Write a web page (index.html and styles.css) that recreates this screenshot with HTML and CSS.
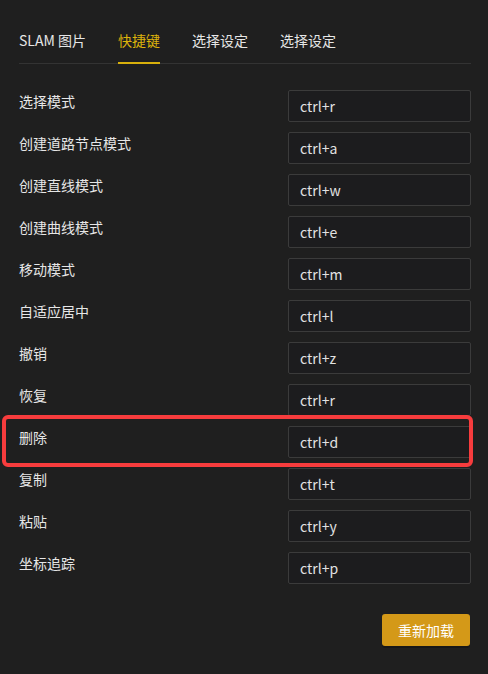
FILE: index.html
```html
<!DOCTYPE html>
<html lang="zh-CN">
<head>
<meta charset="utf-8">
<title>快捷键</title>
<link rel="stylesheet" href="styles.css">
</head>
<body>
<div class="panel">
  <div class="tabs">
    <div class="tab">SLAM 图片</div>
    <div class="tab active">快捷键</div>
    <div class="tab">选择设定</div>
    <div class="tab">选择设定</div>
  </div>
  <div class="rows">
    <div class="row"><div class="label">选择模式</div><div class="field">ctrl+r</div></div>
    <div class="row"><div class="label">创建道路节点模式</div><div class="field">ctrl+a</div></div>
    <div class="row"><div class="label">创建直线模式</div><div class="field">ctrl+w</div></div>
    <div class="row"><div class="label">创建曲线模式</div><div class="field">ctrl+e</div></div>
    <div class="row"><div class="label">移动模式</div><div class="field">ctrl+m</div></div>
    <div class="row"><div class="label">自适应居中</div><div class="field">ctrl+l</div></div>
    <div class="row"><div class="label">撤销</div><div class="field">ctrl+z</div></div>
    <div class="row"><div class="label">恢复</div><div class="field">ctrl+r</div></div>
    <div class="row highlight"><div class="label">删除</div><div class="field">ctrl+d</div></div>
    <div class="row"><div class="label">复制</div><div class="field">ctrl+t</div></div>
    <div class="row"><div class="label">粘贴</div><div class="field">ctrl+y</div></div>
    <div class="row"><div class="label">坐标追踪</div><div class="field">ctrl+p</div></div>
  </div>
  <div class="actions">
    <button class="btn">重新加载</button>
  </div>
</div>
</body>
</html>
```
FILE: styles.css
```css
html, body {
  margin: 0;
  padding: 0;
  background: #1f1f1f;
}
body {
  width: 488px;
  height: 674px;
  overflow: hidden;
  font-family: "Noto Sans CJK SC", "Noto Sans", sans-serif;
  font-size: 14px;
  color: #e6e6e6;
}
.panel {
  padding: 30px 17px 0 19px;
}
.tabs {
  display: flex;
  gap: 32px;
  border-bottom: 1px solid #333333;
}
.tab {
  line-height: 20px;
  padding-bottom: 12px;
  border-bottom: 2px solid transparent;
  margin-bottom: -1px;
  white-space: nowrap;
}
.tab.active {
  color: #dcb20c;
  border-bottom-color: #d8b00c;
}
.rows {
  display: flex;
  flex-direction: column;
  gap: 10px;
  margin-top: 26px;
}
.row {
  display: flex;
  align-items: flex-start;
  position: relative;
}
.label {
  flex: 1;
  line-height: 22px;
}
.field {
  box-sizing: border-box;
  width: 183px;
  height: 32px;
  padding: 0 11px;
  line-height: 30px;
  border: 1px solid #3b3b3b;
  border-radius: 2px;
  background: #1c1c1e;
  color: #e2e2e2;
}
.row.highlight::after {
  content: "";
  position: absolute;
  left: -17px;
  right: -2px;
  top: -11px;
  bottom: -9px;
  border: 4px solid #f73c3d;
  border-radius: 6px;
  pointer-events: none;
}
.actions {
  display: flex;
  justify-content: flex-end;
  margin-top: 30px;
  padding-right: 1px;
}
.btn {
  font-family: inherit;
  font-size: 14px;
  color: #ffffff;
  background: #d49918;
  border: none;
  border-radius: 3px;
  width: 88px;
  height: 32px;
  padding: 0;
  box-shadow: 0 2px 0 rgba(0, 0, 0, 0.25);
}
```
